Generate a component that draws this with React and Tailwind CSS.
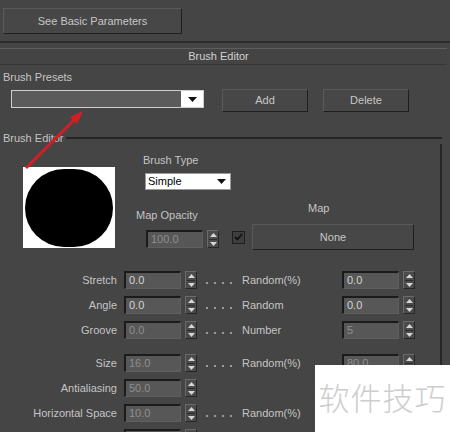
import React from 'react';

const Spinner = () => (
  <div className="w-[12px] h-[18px] border border-t-[#6a6a6a] border-l-[#6a6a6a] border-r-[#262626] border-b-[#262626] bg-[#4b4b4b] flex flex-col items-center justify-center gap-[2px]">
    <svg width="7" height="4" viewBox="0 0 7 4"><path d="M0 4 L3.5 0 L7 4 Z" fill="#d6d6d6" /></svg>
    <div className="w-[8px] h-px bg-[#2c2c2c]" />
    <svg width="7" height="4" viewBox="0 0 7 4"><path d="M0 0 L3.5 4 L7 0 Z" fill="#d6d6d6" /></svg>
  </div>
);

const NumInput = ({ value, bright }) => (
  <div className={`w-[57px] h-[18px] bg-[#575757] border-t-2 border-l-2 border-b border-r border-t-[#1b1b1b] border-l-[#1b1b1b] border-b-[#5f5f5f] border-r-[#5f5f5f] pl-[3px] text-[11px] leading-[14px] ${bright ? 'text-[#d4d4d4]' : 'text-[#8e8e8e]'}`}>
    {value}
  </div>
);

const Dots = () => (
  <div className="flex gap-[6px] self-end mb-[5px] ml-[9px] w-[26px]">
    <span className="w-[2px] h-[2px] bg-[#9a9a9a]" />
    <span className="w-[2px] h-[2px] bg-[#9a9a9a]" />
    <span className="w-[2px] h-[2px] bg-[#9a9a9a]" />
    <span className="w-[2px] h-[2px] bg-[#9a9a9a]" />
  </div>
);

const ParamRow = ({ label, value, bright, right, rightValue, rightBright, className = '' }) => (
  <div className={`flex items-center h-[18px] ${className}`}>
    <div className="w-[117px] text-right text-[#c4c4c4]">{label}</div>
    <div className="ml-[7px]"><NumInput value={value} bright={bright} /></div>
    <div className="ml-[4px]"><Spinner /></div>
    {right !== undefined && (
      <>
        <Dots />
        <div className="ml-[10px] w-[100px] text-[#c4c4c4]">{right}</div>
        <NumInput value={rightValue} bright={rightBright} />
        <div className="ml-[4px]"><Spinner /></div>
      </>
    )}
  </div>
);

const Button = ({ children, className = '' }) => (
  <div className={`flex items-center justify-center bg-[#474747] border border-t-[#5a5a5a] border-l-[#5a5a5a] border-r-[#1f1f1f] border-b-[#1f1f1f] text-[#c6c6c6] ${className}`}>
    {children}
  </div>
);

export default function App() {
  return (
    <div className="relative w-[450px] h-[432px] overflow-hidden bg-[#454545] font-['Liberation_Sans',Arial,sans-serif] text-[11px] leading-[13px] select-none">
      {/* top */}
      <div className="h-[43px] border-b-2 border-[#2c2c2c] pt-[8px] pl-[3px]">
        <Button className="w-[179px] h-[26px]">See Basic Parameters</Button>
      </div>

      {/* rollout title */}
      <div className="mt-[5px] w-[447px] h-[17px] border-t border-b border-t-[#5e5e5e] border-b-[#363636] bg-[#444444] flex items-center justify-center pr-[10px] text-[#d0d0d0]">
        Brush Editor
      </div>

      {/* presets */}
      <div className="mt-[6px] pl-[3px] text-[#c4c4c4]">Brush Presets</div>
      <div className="mt-[5px] flex items-start">
        <div className="ml-[11px] mt-[1px] w-[193px] h-[18px] border border-[#cfcfcf] flex">
          <div className="flex-1 bg-[#5b5b5b]" />
          <div className="w-[22px] bg-white flex items-center justify-center">
            <svg width="9" height="5" viewBox="0 0 9 5"><path d="M0 0 L9 0 L4.5 5 Z" fill="#111" /></svg>
          </div>
        </div>
        <Button className="ml-[18px] w-[86px] h-[23px]">Add</Button>
        <Button className="ml-[15px] w-[86px] h-[23px]">Delete</Button>
      </div>

      {/* group box */}
      <div className="mt-[20px] w-[442px]">
        <div className="flex items-center h-[12px]">
          <span className="pl-[3px] pr-[2px] text-[#c4c4c4]">Brush Editor</span>
          <div className="flex-1 h-[2px] bg-[#262626]" />
        </div>
        <div className="border-r-2 border-[#262626] h-[300px]">
          <div className="flex">
            <div className="w-[136px] pl-[23px] pt-[23px]">
              <div className="w-[92px] h-[81px] bg-white flex items-center justify-center">
                <div className="w-[88px] h-[78px] rounded-full bg-black" />
              </div>
            </div>
            <div className="flex flex-col">
              <div className="pt-[10px] pl-[7px] text-[#c4c4c4]">Brush Type</div>
              <div className="mt-[6px] ml-[9px] w-[86px] h-[17px] bg-white border border-[#9a9a9a] flex items-center justify-between pl-[2px] pr-[4px] text-black">
                <span>Simple</span>
                <svg width="9" height="5" viewBox="0 0 9 5"><path d="M0 0 L9 0 L4.5 5 Z" fill="#111" /></svg>
              </div>
              <div className="mt-[12px] flex items-end">
                <div className="w-[96px] mb-[2px]">
                  <div className="text-[#c4c4c4]">Map Opacity</div>
                  <div className="mt-[8px] ml-[10px] flex">
                    <NumInput value="100.0" />
                    <div className="ml-[4px]"><Spinner /></div>
                  </div>
                </div>
                <div className="flex flex-col">
                  <div className="ml-[76px] text-[#c4c4c4]">Map</div>
                  <div className="mt-[9px] flex items-center">
                    <div className="w-[13px] h-[13px] border border-[#1e1e1e] bg-[#3e3e3e] flex items-center justify-center">
                      <svg width="9" height="8" viewBox="0 0 9 8"><path d="M1 4 L3.5 6.5 L8 1" stroke="#111" strokeWidth="1.8" fill="none" /></svg>
                    </div>
                    <Button className="ml-[7px] w-[162px] h-[26px] text-[#222]">None</Button>
                  </div>
                </div>
              </div>
            </div>
          </div>

          <ParamRow className="mt-[21px]" label="Stretch" value="0.0" bright right="Random(%)" rightValue="0.0" rightBright />
          <ParamRow className="mt-[7px]" label="Angle" value="0.0" bright right="Random" rightValue="0.0" rightBright />
          <ParamRow className="mt-[7px]" label="Groove" value="0.0" right="Number" rightValue="5" />
          <ParamRow className="mt-[15px]" label="Size" value="16.0" right="Random(%)" rightValue="80.0" />
          <ParamRow className="mt-[7px]" label="Antialiasing" value="50.0" />
          <ParamRow className="mt-[7px]" label="Horizontal Space" value="10.0" right="Random(%)" rightValue="" />
          <ParamRow className="mt-[7px]" label="" value="" right="" rightValue="" />
        </div>
      </div>

      {/* red annotation arrow */}
      <svg className="absolute left-0 top-0 pointer-events-none" width="450" height="432" viewBox="0 0 450 432">
        <line x1="26" y1="168" x2="76" y2="118" stroke="#d21f26" strokeWidth="3" />
        <path d="M83 111 L70 117 L77 124 Z" fill="#d21f26" />
      </svg>

      {/* watermark */}
      <div className="absolute right-0 bottom-0 w-[135px] h-[67px] bg-white flex items-center justify-center pb-[4px]">
        <span className="text-[31px] leading-[36px] text-[#cdcdcd] font-['Noto_Sans_CJK_SC',sans-serif] font-light tracking-[1px]">软件技巧</span>
      </div>
    </div>
  );
}
